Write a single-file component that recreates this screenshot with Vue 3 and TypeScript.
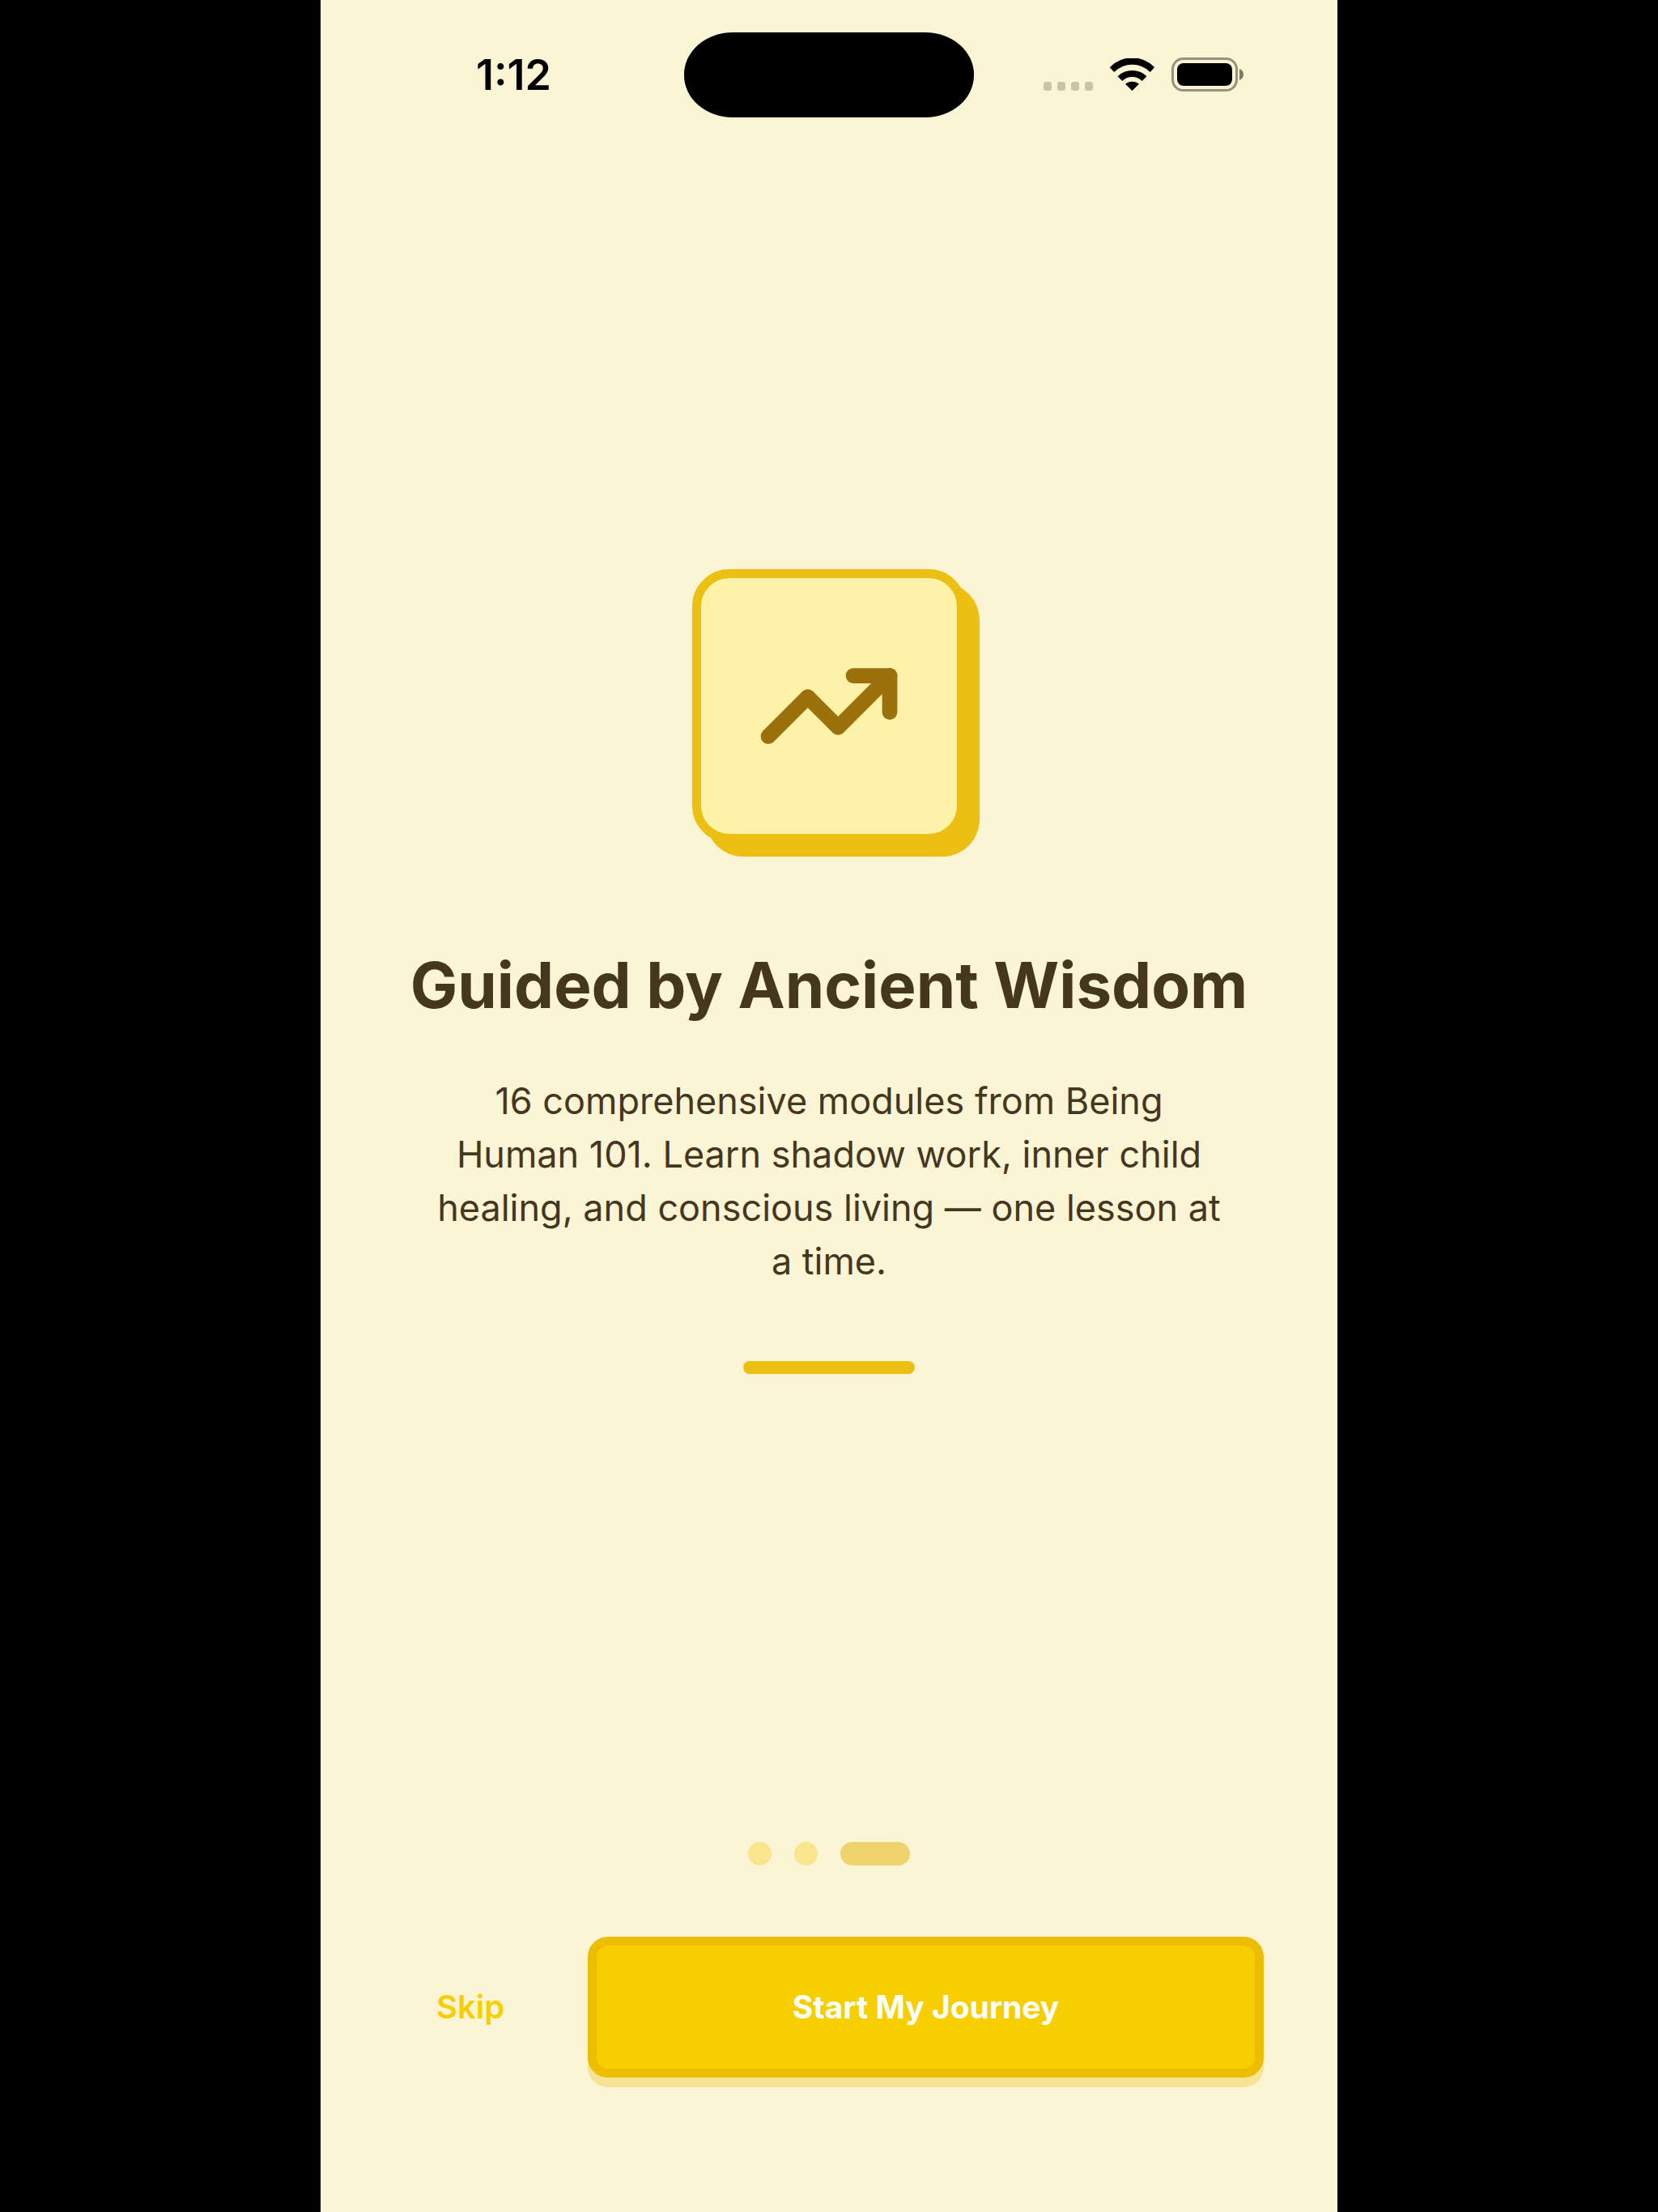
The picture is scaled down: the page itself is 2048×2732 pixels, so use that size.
<script setup lang="ts">
import { ref } from 'vue'

interface Slide {
  title: string
  body: string
  action: string
}

const slideCount = 3
const current = ref(2)

const slide: Slide = {
  title: 'Guided by Ancient Wisdom',
  body: '16 comprehensive modules from Being Human 101. Learn shadow work, inner child healing, and conscious living — one lesson at a time.',
  action: 'Start My Journey',
}
</script>

<template>
  <div class="stage">
    <div class="screen">
      <header class="status">
        <time class="clock">1:12</time>
        <div class="island"></div>
        <div class="indicators">
          <span class="cellular"><i v-for="n in 4" :key="n"></i></span>
          <svg class="wifi" viewBox="0 0 55 40" aria-label="Wi-Fi">
            <path d="M0 11.5 Q0 11 .5 10.5 A38 38 0 0 1 54.5 10.5 Q55 11 54.7 11.5 L50.3 16.4 Q49.6 17 49 16.4 A31 31 0 0 0 6 16.4 Q5.4 17 4.7 16.4 Z" />
            <path d="M9.6 22.3 A25.5 25.5 0 0 1 45.4 22.3 L40.3 27.6 Q39.7 28 39.1 27.5 A17.5 17.5 0 0 0 15.9 27.5 Q15.3 28 14.7 27.6 Z" />
            <path d="M19 31.8 A13 13 0 0 1 36 31.8 L28.1 39.6 Q27.5 40.2 26.9 39.6 Z" />
          </svg>
          <svg class="battery" viewBox="0 0 90 42" aria-label="Battery full">
            <rect x="1.5" y="1.5" width="79" height="39" rx="13" fill="none" stroke="#97917d" stroke-width="3" />
            <rect x="7" y="7" width="68" height="28" rx="8" />
            <path d="M84 14 Q89 16 89 21 Q89 26 84 28 Z" fill="#7f7b6b" />
          </svg>
        </div>
      </header>

      <main class="slide">
        <div class="badge">
          <svg viewBox="0 0 24 24" fill="none" stroke="#9b710e" stroke-width="2.5" stroke-linecap="round" stroke-linejoin="round" aria-hidden="true">
            <polyline points="22 7 13.5 15.5 8.5 10.5 2 17" />
            <polyline points="16 7 22 7 22 13" />
          </svg>
        </div>
        <h1>{{ slide.title }}</h1>
        <p>{{ slide.body }}</p>
        <div class="rule"></div>
      </main>

      <footer class="footer">
        <div class="pager">
          <span v-for="n in slideCount" :key="n" :class="['dot', { active: n - 1 === current }]"></span>
        </div>
        <div class="actions">
          <button type="button" class="skip">Skip</button>
          <button type="button" class="start">{{ slide.action }}</button>
        </div>
      </footer>
    </div>
  </div>
</template>

<style>
body {
  margin: 0;
  background: #000;
}
</style>

<style scoped>
.stage {
  display: flex;
  justify-content: center;
  background: #000;
  font-family: Inter, "Liberation Sans", sans-serif;
}

.screen {
  box-sizing: border-box;
  display: flex;
  flex-direction: column;
  width: 100%;
  max-width: 1256px;
  min-height: 100vh;
  background: #fbf4d5;
  color: #45371e;
}

.status {
  display: grid;
  grid-template-columns: 1fr auto 1fr;
  align-items: center;
  padding: 40px 0 25px;
}

.clock {
  padding-left: 192px;
  font-size: 52px;
  line-height: 60px;
  font-weight: 600;
  color: #000;
}

.island {
  width: 358px;
  height: 105px;
  border-radius: 60px / 52px;
  background: #000;
}

.indicators {
  display: flex;
  justify-content: flex-end;
  align-items: flex-end;
  gap: 21px;
  padding: 0 115px 2px 0;
}

.cellular {
  display: flex;
  gap: 7px;
  margin-bottom: 1px;
}

.cellular i {
  width: 10px;
  height: 11px;
  border-radius: 3px;
  background: #cac3aa;
}

.wifi {
  width: 55px;
  height: 40px;
  margin-bottom: 1px;
}

.battery {
  width: 90px;
  height: 42px;
}

.slide {
  flex: 1;
  display: flex;
  flex-direction: column;
  align-items: center;
  justify-content: center;
  padding: 0 108px;
  text-align: center;
}

.badge {
  box-sizing: border-box;
  display: flex;
  align-items: center;
  justify-content: center;
  width: 338px;
  height: 338px;
  border: 11px solid #ebc012;
  border-radius: 46px;
  background: #fef1a8;
  box-shadow: 17px 17px 0 #ebc012;
}

.badge svg {
  width: 180px;
  height: 180px;
}

h1 {
  margin: 124px 0 0;
  font-size: 78px;
  line-height: 104px;
  font-weight: 700;
}

p {
  max-width: 976px;
  margin: 58px 0 0;
  font-size: 45px;
  line-height: 66px;
}

.rule {
  width: 212px;
  height: 16px;
  margin-top: 90px;
  border-radius: 8px;
  background: #ebc012;
}

.footer {
  padding: 46px 91px 166px;
}

.pager {
  display: flex;
  justify-content: center;
  gap: 28px;
}

.dot {
  width: 29px;
  height: 29px;
  border-radius: 15px;
  background: #f9e58b;
}

.dot.active {
  width: 86px;
  background: #efd36d;
}

.actions {
  display: flex;
  gap: 51px;
  margin-top: 88px;
}

button {
  margin: 0;
  padding: 0;
  border: 0;
  font-family: inherit;
  font-size: 40px;
  line-height: 48px;
}

.skip {
  width: 188px;
  background: none;
  color: #f7cf00;
  font-weight: 600;
}

.start {
  flex: 1;
  height: 174px;
  border: 11px solid #ecbd00;
  border-radius: 25px;
  background: #f7cf00;
  box-shadow: 0 12px 0 #f7e396;
  color: #fff;
  font-size: 39px;
  font-weight: 700;
}
</style>
